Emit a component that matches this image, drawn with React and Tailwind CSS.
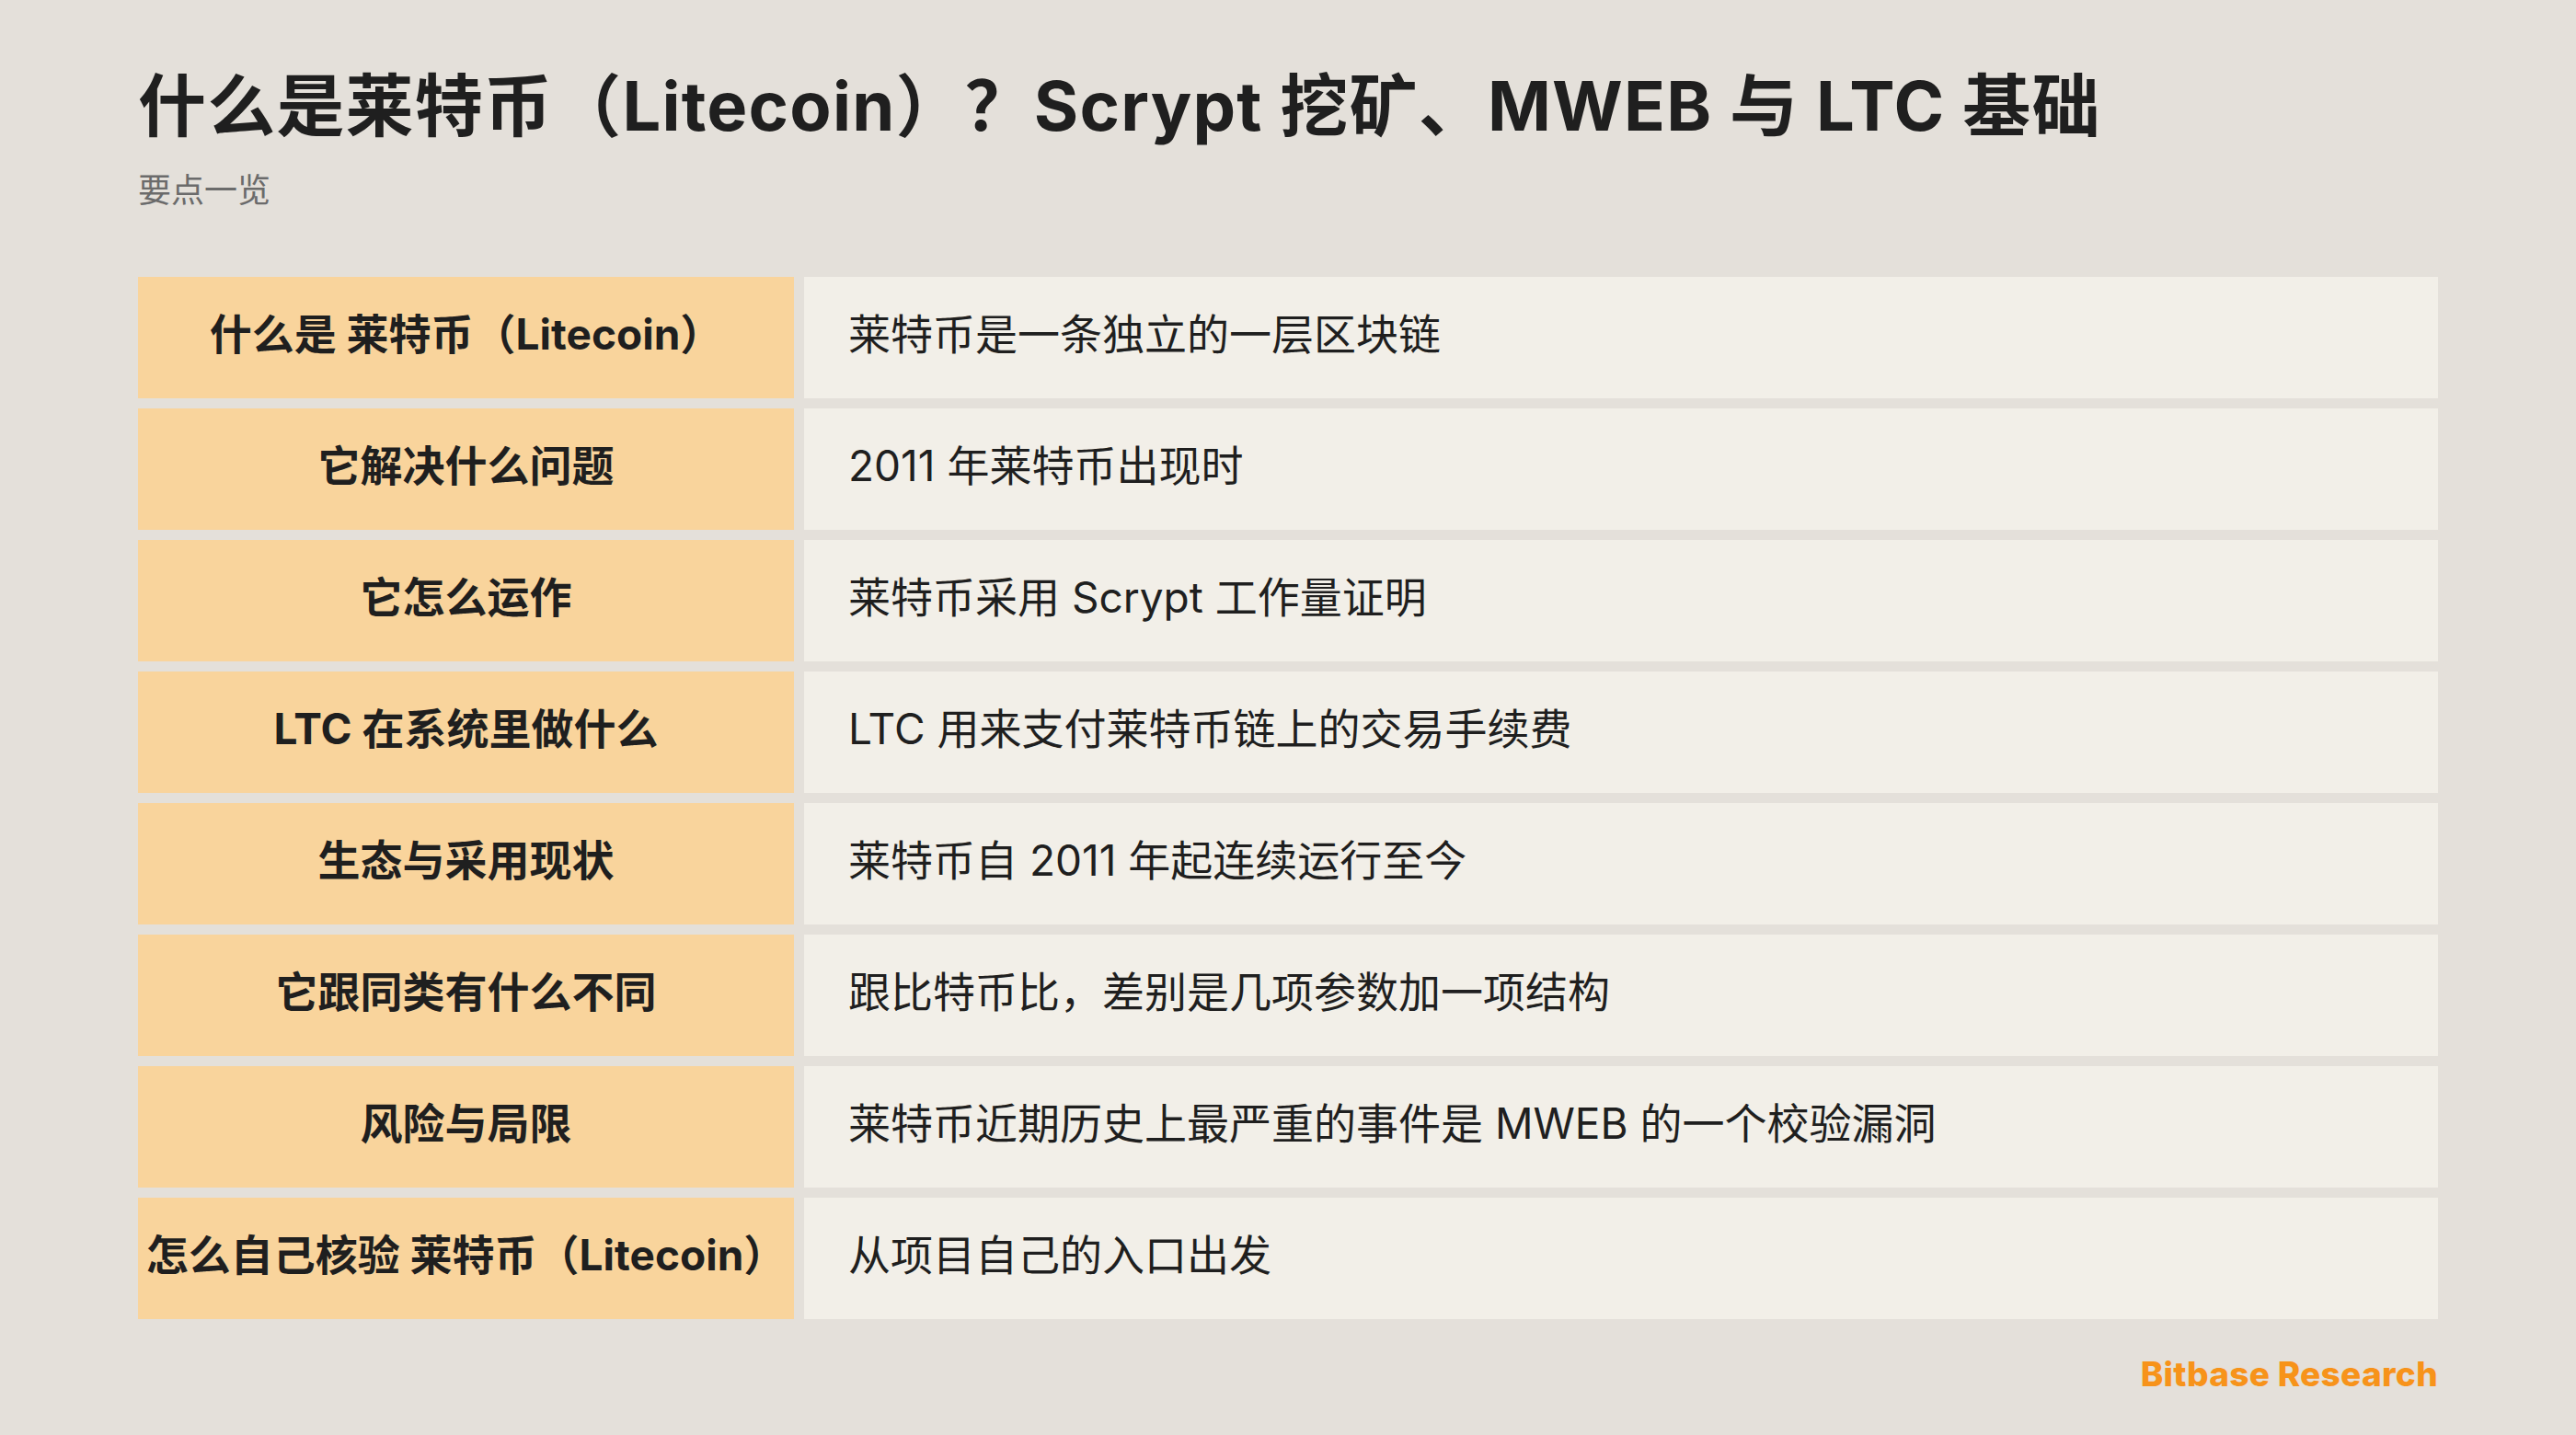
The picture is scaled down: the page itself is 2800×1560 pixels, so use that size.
import React from 'react';

const rows = [
    ['什么是 莱特币（Litecoin）', '莱特币是一条独立的一层区块链'],
    ['它解决什么问题', '2011 年莱特币出现时'],
    ['它怎么运作', '莱特币采用 Scrypt 工作量证明'],
    ['LTC 在系统里做什么', 'LTC 用来支付莱特币链上的交易手续费'],
    ['生态与采用现状', '莱特币自 2011 年起连续运行至今'],
    ['它跟同类有什么不同', '跟比特币比，差别是几项参数加一项结构'],
    ['风险与局限', '莱特币近期历史上最严重的事件是 MWEB 的一个校验漏洞'],
    ['怎么自己核验 莱特币（Litecoin）', '从项目自己的入口出发'],
];

const App = () => {
    return (
        <div
            className="min-h-screen w-full bg-[#e4e0da] px-[150px] pt-[71px] text-[#1f1f1f]"
            style={{ fontFamily: 'Inter, "Noto Sans CJK SC", sans-serif' }}
        >
            <h1 className="text-[74px] font-bold leading-[1.2] tracking-[1.2px]">
                什么是莱特币（Litecoin）？Scrypt 挖矿、MWEB 与 LTC 基础
            </h1>
            <p className="mt-[22px] text-[36px] leading-[1.4] text-[#6b6b6b]">要点一览</p>

            {/* summary table */}
            <div className="mt-[69px] grid grid-cols-[713px_1fr] gap-x-[11px] gap-y-[11px]">
                {rows.map(([label, text]) => (
                    <React.Fragment key={label}>
                        <div className="flex h-[132px] items-center justify-center bg-[#f9d49c] pb-[8px] text-[46px] font-bold">
                            {label}
                        </div>
                        <div className="flex h-[132px] items-center bg-[#f2efe8] pb-[8px] pl-[48px] text-[46px]">
                            {text}
                        </div>
                    </React.Fragment>
                ))}
            </div>

            <div className="mt-[38px] flex justify-end">
                <span className="text-[37px] font-extrabold leading-[1.2] tracking-[0.3px] text-[#f7931a]">
                    Bitbase Research
                </span>
            </div>
        </div>
    );
};

export default App;
